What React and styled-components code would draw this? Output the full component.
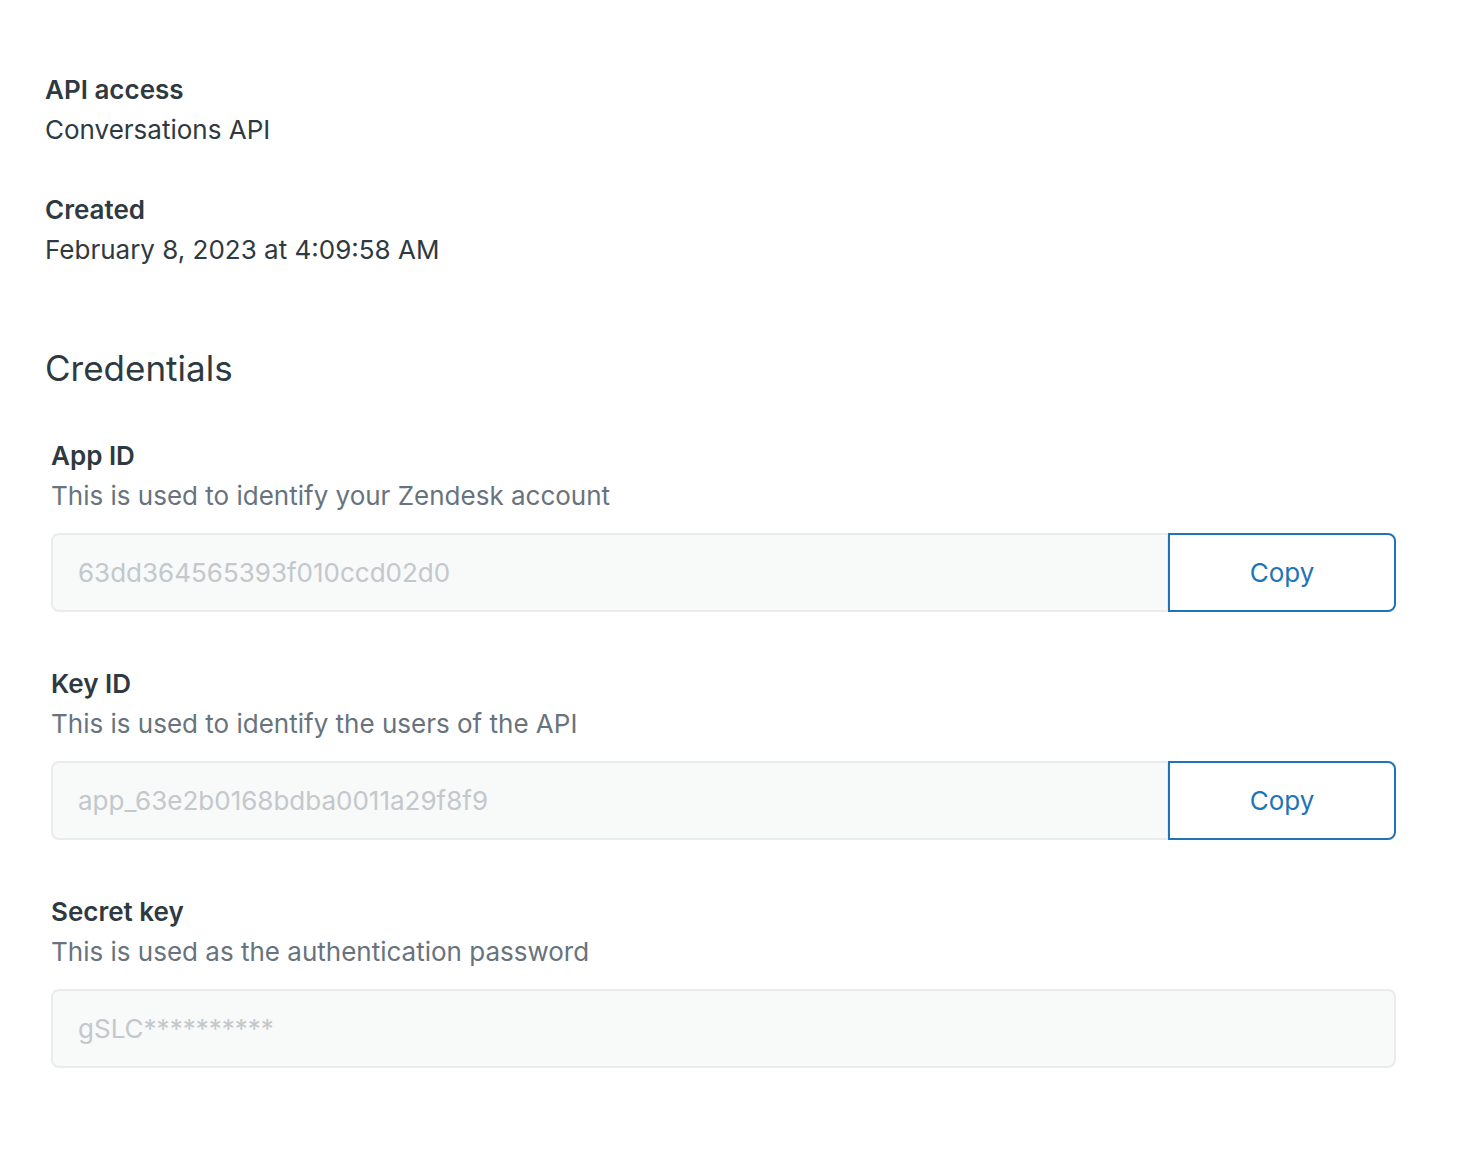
import React from "react";
import styled, { createGlobalStyle } from "styled-components";

const Global = createGlobalStyle`
  body { margin: 0; background: #fff; font-family: Inter, "Noto Sans", sans-serif; color: #2f3941; }
`;
const Page = styled.div`padding: 70px 62px 0 45px;`;
const Meta = styled.div`margin-bottom: 40px;`;
const Label = styled.div`font-weight: 600; font-size: 26px; line-height: 40px; color: #2f3941;`;
const Value = styled.div`font-size: 26px; line-height: 40px; color: #2f3941;`;
const Heading = styled.h2`margin: 74px 0 44px; font-weight: 400; font-size: 35px; line-height: 48px; color: #2f3941;`;
const Field = styled.div`padding-left: 6px; margin-bottom: 52px;`;
const Hint = styled.div`font-size: 26px; line-height: 40px; color: #68737d; margin-bottom: 17px;`;
const Row = styled.div`display: flex; height: 79px;`;
const Input = styled.div`
  flex: 1; display: flex; align-items: center; padding: 0 25px;
  background: #f8f9f9; border: 2px solid #e9ebed;
  border-radius: ${p => (p.$alone ? "8px" : "8px 0 0 8px")};
  font-size: 26px; color: #c2c8cc;
`;
const Button = styled.button`
  width: 228px; background: #fff; border: 2px solid #1f73b7; border-radius: 0 8px 8px 0;
  font-family: inherit; font-size: 26px; color: #1f73b7; margin-left: -1px;
`;

const fields = [
  { l: "App ID", h: "This is used to identify your Zendesk account", v: "63dd364565393f010ccd02d0", c: true },
  { l: "Key ID", h: "This is used to identify the users of the API", v: "app_63e2b0168bdba0011a29f8f9", c: true },
  { l: "Secret key", h: "This is used as the authentication password", v: "gSLC**********", c: false },
];

export default function App() {
  return (
    <Page>
      <Global />
      <Meta><Label>API access</Label><Value>Conversations API</Value></Meta>
      <Meta><Label>Created</Label><Value>February 8, 2023 at 4:09:58 AM</Value></Meta>
      <Heading>Credentials</Heading>
      {fields.map(f => (
        <Field key={f.l}>
          <Label>{f.l}</Label>
          <Hint>{f.h}</Hint>
          <Row>
            <Input $alone={!f.c}>{f.v}</Input>
            {f.c && <Button>Copy</Button>}
          </Row>
        </Field>
      ))}
    </Page>
  );
}
